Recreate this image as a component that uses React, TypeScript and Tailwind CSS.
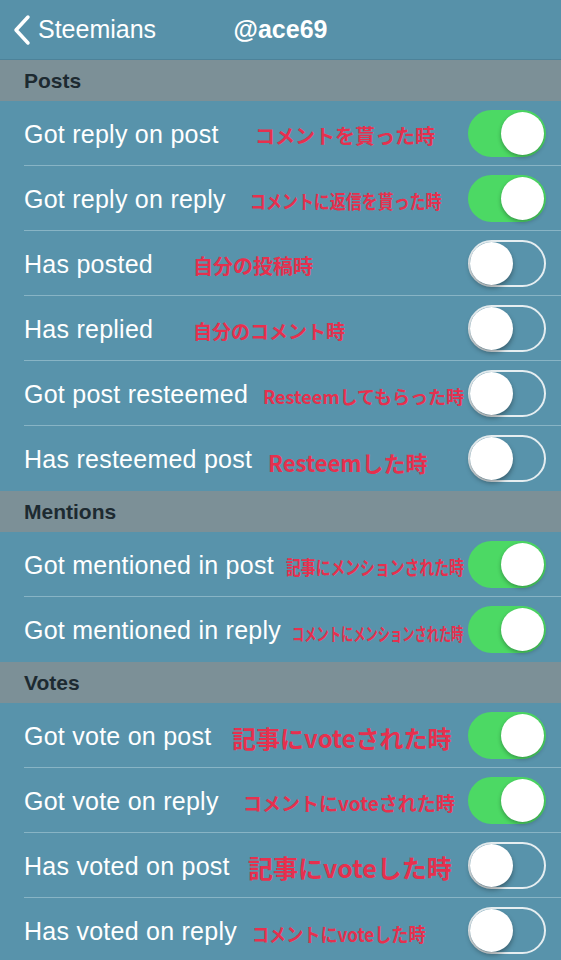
import React from "react";

type Row = {
  label: string;
  on: boolean;
  note: string;
  noteClass: string;
};

type Section = { title: string; rows: Row[] };

const sections: Section[] = [
  {
    title: "Posts",
    rows: [
      { label: "Got reply on post", on: true, note: "コメントを貰った時", noteClass: "left-[231px] text-[20px]" },
      { label: "Got reply on reply", on: true, note: "コメントに返信を貰った時", noteClass: "left-[226px] text-[19px] scale-x-[0.84]" },
      { label: "Has posted", on: false, note: "自分の投稿時", noteClass: "left-[169px] text-[20px]" },
      { label: "Has replied", on: false, note: "自分のコメント時", noteClass: "left-[169px] text-[19px]" },
      { label: "Got post resteemed", on: false, note: "Resteemしてもらった時", noteClass: "left-[239px] text-[18px]" },
      { label: "Has resteemed post", on: false, note: "Resteemした時", noteClass: "left-[244px] text-[22px]" },
    ],
  },
  {
    title: "Mentions",
    rows: [
      { label: "Got mentioned in post", on: true, note: "記事にメンションされた時", noteClass: "left-[262px] text-[19px] scale-x-[0.78]" },
      { label: "Got mentioned in reply", on: true, note: "コメントにメンションされた時", noteClass: "left-[268px] text-[18px] scale-x-[0.68]" },
    ],
  },
  {
    title: "Votes",
    rows: [
      { label: "Got vote on post", on: true, note: "記事にvoteされた時", noteClass: "left-[208px] text-[24px]" },
      { label: "Got vote on reply", on: true, note: "コメントにvoteされた時", noteClass: "left-[219px] text-[19px]" },
      { label: "Has voted on post", on: false, note: "記事にvoteした時", noteClass: "left-[224px] text-[25px]" },
      { label: "Has voted on reply", on: false, note: "コメントにvoteした時", noteClass: "left-[228px] text-[19px] scale-x-[0.9]" },
    ],
  },
];

function Toggle({ on }: { on: boolean }) {
  if (on) {
    return (
      <div className="w-[78px] h-[47px] rounded-full bg-[#4cd964] flex items-center justify-end pr-[2px] shrink-0">
        <div className="w-[43px] h-[43px] rounded-full bg-white shadow-[0_2px_4px_rgba(0,0,0,0.3)]" />
      </div>
    );
  }
  return (
    <div className="w-[78px] h-[47px] rounded-full border-2 border-[#e6eef1] flex items-center shrink-0">
      <div className="w-[43px] h-[43px] rounded-full bg-white shadow-[0_3px_5px_rgba(0,0,0,0.35)]" />
    </div>
  );
}

export default function App() {
  return (
    <div
      className="w-[561px] h-[960px] overflow-hidden bg-[#5893ab] text-white"
      style={{ fontFamily: '"Liberation Sans", "Noto Sans CJK JP", sans-serif' }}
    >
      {/* Nav bar */}
      <div className="h-[60px] grid grid-cols-[1fr_auto_1fr] items-center border-b border-[#4d8299] bg-[#5791a9]">
        <div className="flex items-center pl-[12px]">
          <svg width="20" height="32" viewBox="0 0 20 32" fill="none">
            <path d="M16 3 L4 16 L16 29" stroke="white" strokeWidth="3.5" strokeLinecap="round" strokeLinejoin="round" />
          </svg>
          <span className="ml-[6px] text-[25px]">Steemians</span>
        </div>
        <div className="text-[25px] font-bold">@ace69</div>
        <div />
      </div>

      {sections.map((s) => (
        <div key={s.title}>
          <div className="h-[41px] bg-[#7c9097] flex items-center pl-6 text-[21px] font-bold text-[#1d2a31]">
            {s.title}
          </div>
          {s.rows.map((r, i) => (
            <div
              key={r.label}
              className={
                "ml-6 h-[65px] pr-[15px] flex items-center relative " +
                (i < s.rows.length - 1 ? "border-b border-[#88b4c5]" : "")
              }
            >
              <span className="text-[25px] tracking-[0.01em] pt-[3px]">{r.label}</span>
              <span
                className={
                  "absolute top-[calc(50%+3px)] -translate-y-1/2 origin-left font-bold text-[#e6304e] whitespace-nowrap " +
                  r.noteClass
                }
                style={{ fontFamily: '"Noto Sans CJK JP", sans-serif' }}
              >
                {r.note}
              </span>
              <div className="ml-auto">
                <Toggle on={r.on} />
              </div>
            </div>
          ))}
        </div>
      ))}
    </div>
  );
}
